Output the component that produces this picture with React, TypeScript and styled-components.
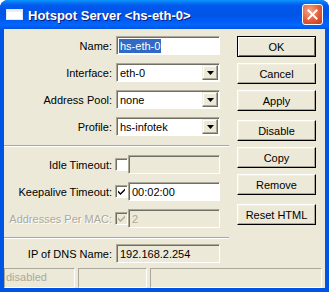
import styled, { createGlobalStyle } from 'styled-components';

const GlobalStyle = createGlobalStyle`
  html, body {
    margin: 0;
    padding: 0;
    background: #ffffff;
  }
  body {
    font-family: "Liberation Sans", Arial, sans-serif;
    font-size: 11px;
  }
`;

const Window = styled.div`
  width: 329px;
  height: 292px;
  display: flex;
  flex-direction: column;
  box-sizing: border-box;
  border-radius: 8px 8px 0 0;
  overflow: hidden;
  background: #0054e3;
`;

const TitleBar = styled.div`
  height: 29px;
  flex-shrink: 0;
  display: flex;
  align-items: center;
  padding: 0 6px 0 6px;
  gap: 5px;
  background: linear-gradient(
    to bottom,
    #0997ff 0%,
    #0a77f0 8%,
    #0058ee 20%,
    #0055e5 50%,
    #005bf5 70%,
    #0266fc 86%,
    #0054e3 100%
  );
`;

const Title = styled.span`
  flex: 1;
  color: #ffffff;
  font-family: "Liberation Sans", Arial, sans-serif;
  font-weight: bold;
  font-size: 13px;
  text-shadow: 1px 1px 0 #0a1e7a;
  padding-top: 1px;
`;

const CloseButton = styled.div`
  width: 19px;
  height: 19px;
  border: 1px solid #ffffff;
  border-radius: 3px;
  background: radial-gradient(circle at 35% 30%, #f3a586 0%, #e35c39 55%, #c1391a 100%);
  display: flex;
  align-items: center;
  justify-content: center;
`;

const Frame = styled.div`
  flex: 1;
  min-height: 0;
  display: flex;
  flex-direction: column;
  margin: 0 4px 4px 4px;
  background: #ece9d8;
`;

const Main = styled.div`
  flex: 1;
  min-height: 0;
  display: flex;
  padding: 7px 0 0 0;
`;

const Form = styled.div`
  width: 225px;
  display: flex;
  flex-direction: column;
`;

const Row = styled.div<{ $last?: boolean }>`
  display: flex;
  align-items: center;
  height: 19px;
  margin-bottom: ${(p) => (p.$last ? 0 : 8)}px;
`;

const Label = styled.span<{ $disabled?: boolean }>`
  width: 112px;
  text-align: right;
  padding-right: 4px;
  box-sizing: border-box;
  white-space: nowrap;
  color: ${(p) => (p.$disabled ? '#aca899' : '#000000')};
  text-shadow: ${(p) => (p.$disabled ? '1px 1px 0 #ffffff' : 'none')};
`;

const Field = styled.div<{ $disabled?: boolean; $width?: number }>`
  width: ${(p) => p.$width ?? 104}px;
  height: 19px;
  box-sizing: border-box;
  display: flex;
  align-items: center;
  border-top: 1px solid #aca899;
  border-left: 1px solid #aca899;
  border-bottom: 1px solid #ffffff;
  border-right: 1px solid #ffffff;
  box-shadow: inset 1px 1px 0 #716f64;
  background: ${(p) => (p.$disabled ? '#ece9d8' : '#ffffff')};
  color: ${(p) => (p.$disabled ? '#aca899' : '#000000')};
  padding-left: 3px;
  overflow: hidden;
`;

const FieldText = styled.span<{ $dark?: boolean }>`
  flex: 1;
  white-space: nowrap;
  color: ${(p) => (p.$dark ? '#000000' : 'inherit')};
`;

const Selected = styled.span`
  background: #316ac5;
  color: #ffffff;
  margin-left: -1px;
  padding: 1px 1px;
`;

const DropArrow = styled.div`
  width: 16px;
  height: 15px;
  margin-right: 1px;
  box-sizing: border-box;
  background: #ece9d8;
  border-top: 1px solid #f1efe2;
  border-left: 1px solid #f1efe2;
  border-right: 1px solid #716f64;
  border-bottom: 1px solid #716f64;
  box-shadow: inset -1px -1px 0 #aca899, inset 1px 1px 0 #ffffff;
  display: flex;
  align-items: center;
  justify-content: center;
`;

const Check = styled.div<{ $disabled?: boolean }>`
  width: 13px;
  height: 13px;
  box-sizing: border-box;
  margin: 0 0 0 -1px;
  border-top: 1px solid #aca899;
  border-left: 1px solid #aca899;
  border-bottom: 1px solid #ffffff;
  border-right: 1px solid #ffffff;
  box-shadow: inset 1px 1px 0 #716f64;
  background: ${(p) => (p.$disabled ? '#ece9d8' : '#ffffff')};
  display: flex;
  align-items: center;
  justify-content: center;
`;

const Separator = styled.div<{ $after?: number }>`
  height: 0;
  border-top: 1px solid #aca899;
  border-bottom: 1px solid #ffffff;
  margin: 1px 0 ${(p) => p.$after ?? 8}px 0;
`;

const Buttons = styled.div`
  display: flex;
  flex-direction: column;
  margin-left: 8px;
  width: 79px;
`;

const Button = styled.div<{ $default?: boolean; $gap?: number }>`
  height: 21px;
  box-sizing: border-box;
  display: flex;
  align-items: center;
  justify-content: center;
  margin-bottom: ${(p) => p.$gap ?? 6}px;
  background: #ece9d8;
  border: 1px solid ${(p) => (p.$default ? '#000000' : '#ffffff')};
  border-right-color: #000000;
  border-bottom-color: #000000;
  box-shadow: ${(p) =>
    p.$default
      ? 'inset 1px 1px 0 #ffffff, inset -1px -1px 0 #716f64'
      : 'inset -1px -1px 0 #aca899, inset 1px 1px 0 #f1efe2'};
`;

const StatusBar = styled.div`
  height: 20px;
  flex-shrink: 0;
  display: flex;
  gap: 3px;
  padding: 0 3px 0 0;
`;

const StatusPanel = styled.div<{ $width?: number }>`
  width: ${(p) => (p.$width ? `${p.$width}px` : 'auto')};
  flex: ${(p) => (p.$width ? 'none' : '1')};
  box-sizing: border-box;
  border-top: 1px solid #aca899;
  border-left: 1px solid #aca899;
  border-bottom: 1px solid #ffffff;
  border-right: 1px solid #ffffff;
  color: #aca899;
  padding-left: 1px;
  line-height: 17px;
`;

function Arrow() {
  return (
    <svg width="7" height="4" viewBox="0 0 7 4">
      <path d="M0 0h7L3.5 4z" fill="#000" />
    </svg>
  );
}

function Tick({ color }: { color: string }) {
  return (
    <svg width="9" height="9" viewBox="0 0 9 9">
      <path d="M1 3.5 L3.5 6 L8 1.5 V3.5 L3.5 8 L1 5.5 Z" fill={color} />
    </svg>
  );
}

export default function App() {
  return (
    <>
      <GlobalStyle />
      <Window>
        <TitleBar>
          <svg width="17" height="11" viewBox="0 0 17 11">
            <rect x="0.5" y="0.5" width="16" height="10" fill="#ffffff" stroke="#dfe8fa" />
            <rect x="1" y="1" width="15" height="2" fill="#e8eefb" />
          </svg>
          <Title>Hotspot Server &lt;hs-eth-0&gt;</Title>
          <CloseButton>
            <svg width="11" height="11" viewBox="0 0 11 11">
              <path d="M1.5 1.5 L9.5 9.5 M9.5 1.5 L1.5 9.5" stroke="#ffffff" strokeWidth="2" strokeLinecap="square" />
            </svg>
          </CloseButton>
        </TitleBar>
        <Frame>
          <Main>
            <Form>
              <Row>
                <Label>Name:</Label>
                <Field>
                  <FieldText>
                    <Selected>hs-eth-0</Selected>
                  </FieldText>
                </Field>
              </Row>
              <Row>
                <Label>Interface:</Label>
                <Field>
                  <FieldText>eth-0</FieldText>
                  <DropArrow>
                    <Arrow />
                  </DropArrow>
                </Field>
              </Row>
              <Row>
                <Label>Address Pool:</Label>
                <Field>
                  <FieldText>none</FieldText>
                  <DropArrow>
                    <Arrow />
                  </DropArrow>
                </Field>
              </Row>
              <Row>
                <Label>Profile:</Label>
                <Field>
                  <FieldText>hs-infotek</FieldText>
                  <DropArrow>
                    <Arrow />
                  </DropArrow>
                </Field>
              </Row>
              <Separator />
              <Row>
                <Label>Idle Timeout:</Label>
                <Check />
                <Field $disabled $width={92}>
                  <FieldText />
                </Field>
              </Row>
              <Row>
                <Label>Keepalive Timeout:</Label>
                <Check>
                  <Tick color="#000000" />
                </Check>
                <Field $width={92}>
                  <FieldText>00:02:00</FieldText>
                </Field>
              </Row>
              <Row>
                <Label $disabled>Addresses Per MAC:</Label>
                <Check $disabled>
                  <Tick color="#aca899" />
                </Check>
                <Field $disabled $width={92}>
                  <FieldText>2</FieldText>
                </Field>
              </Row>
              <Separator $after={5} />
              <Row $last>
                <Label>IP of DNS Name:</Label>
                <Field $disabled>
                  <FieldText $dark>192.168.2.254</FieldText>
                </Field>
              </Row>
            </Form>
            <Buttons>
              <Button $default>OK</Button>
              <Button>Cancel</Button>
              <Button $gap={9}>Apply</Button>
              <Button>Disable</Button>
              <Button>Copy</Button>
              <Button $gap={9}>Remove</Button>
              <Button>Reset HTML</Button>
            </Buttons>
          </Main>
          <StatusBar>
            <StatusPanel $width={71}>disabled</StatusPanel>
            <StatusPanel $width={69} />
            <StatusPanel />
          </StatusBar>
        </Frame>
      </Window>
    </>
  );
}
